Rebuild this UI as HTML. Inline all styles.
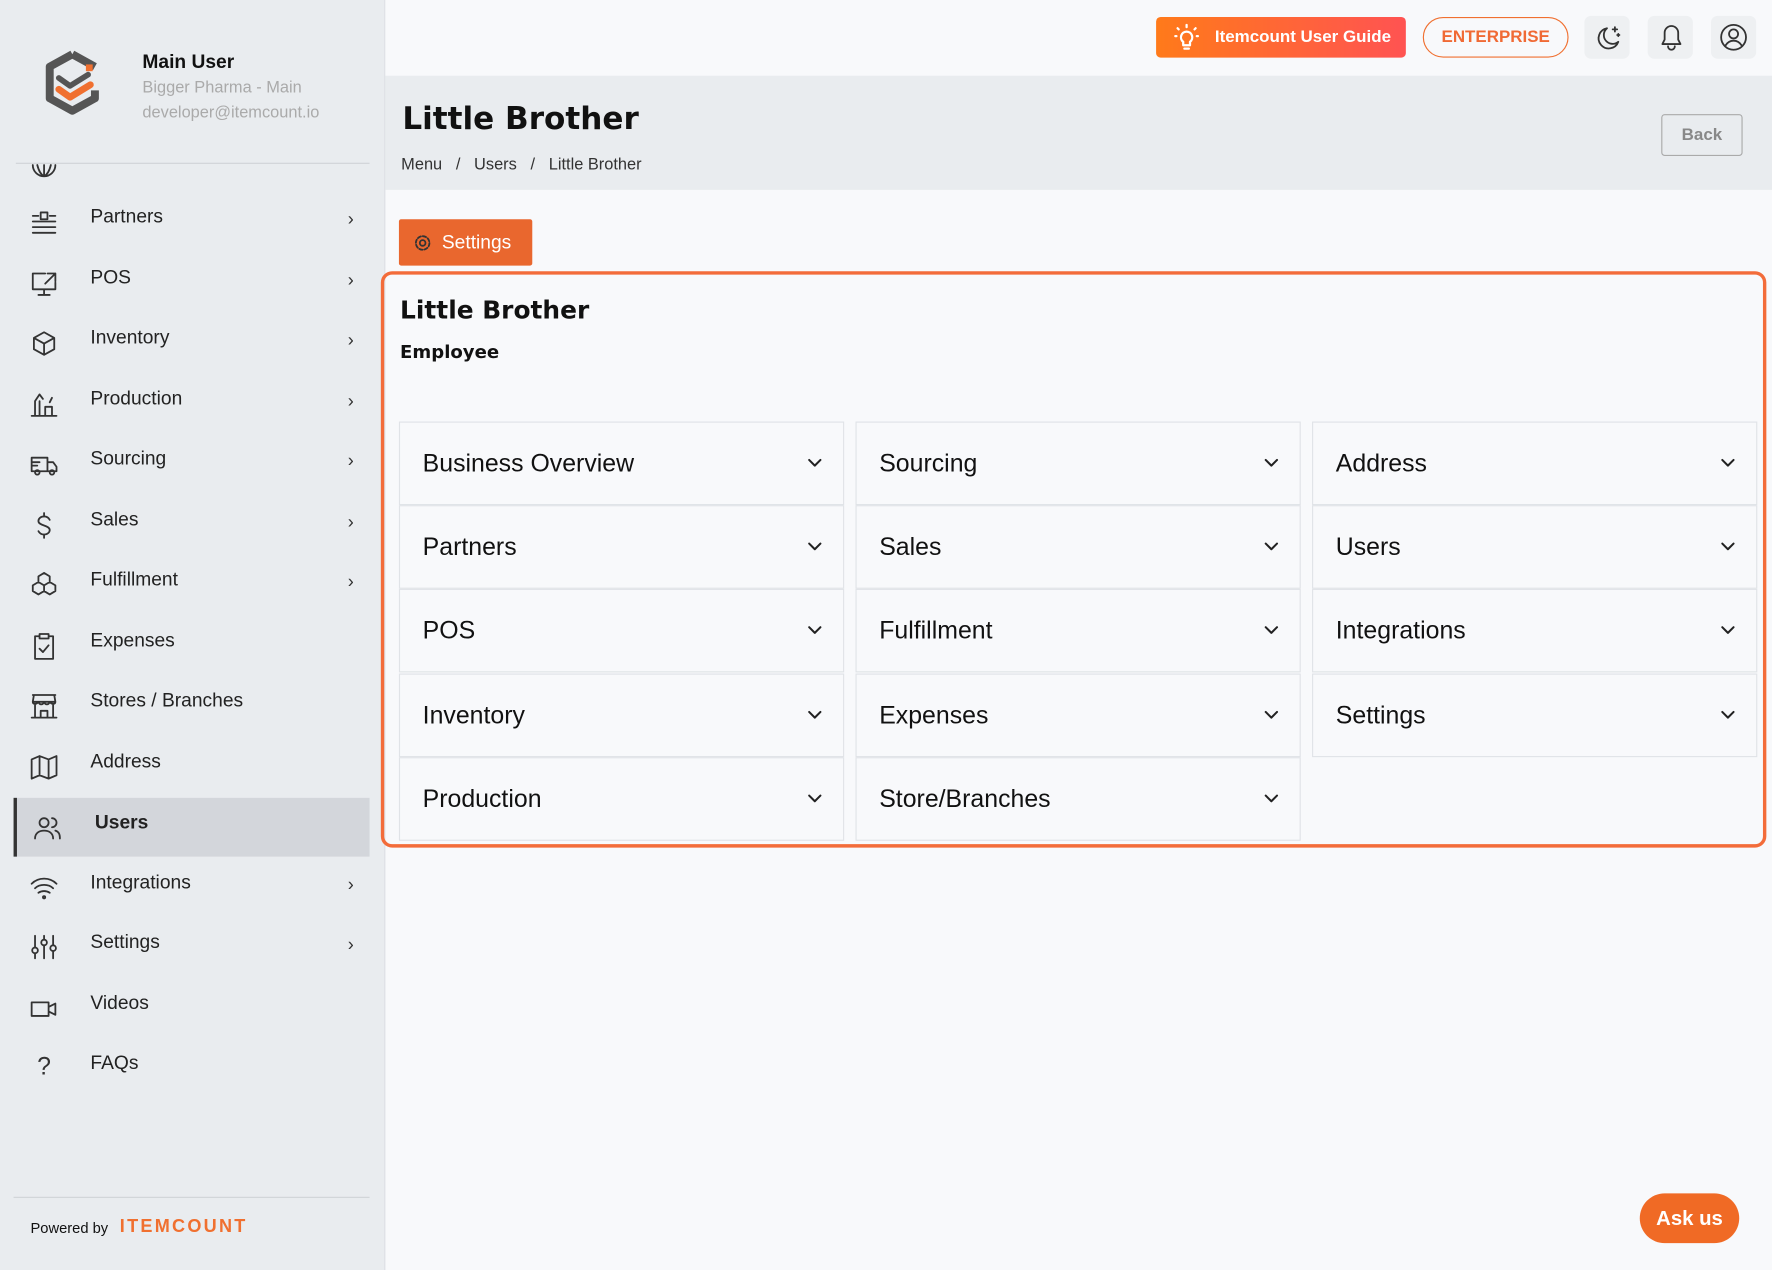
<!DOCTYPE html>
<html><head><meta charset="utf-8"><style>
html,body{margin:0;padding:0;width:1772px;height:1270px;overflow:hidden;background:#f8f9fb}
#w{position:absolute;left:0;top:0;width:1568px;height:1124px;transform:scale(1.13010);transform-origin:0 0;font-family:"Liberation Sans",sans-serif;color:#111}
.sb{position:absolute;left:0;top:0;width:340px;height:1124px;background:#e9ecef;border-right:1px solid #dde0e4}
.ni{position:absolute;left:12px;width:315px;height:52px}
.ni .ic{position:absolute;left:14px;top:14px;width:26px;height:26px}
.ni .t{position:absolute;left:68px;top:0;line-height:44px;font-size:17px;color:#222}
.ni .ch{position:absolute;right:14px;top:16px;font-size:16px;color:#333}
.top{position:absolute;left:341px;top:0;right:0;height:67px;background:#f8f9fb}
.hdr{position:absolute;left:341px;top:67px;right:0;height:101px;background:#e9ecef}
.card{position:absolute;left:337px;top:240px;width:1226px;height:510px;border:3px solid #f36c3a;border-radius:10px;box-sizing:border-box}
.acc{position:absolute;width:394px;height:74px;background:#f8f9fb;border:1px solid #e0e3e7;box-sizing:border-box}
.acc span{position:absolute;left:20px;top:0;line-height:72px;font-size:22px;color:#111}
.acc svg{position:absolute;right:18px;top:30px}
.ib{position:absolute;top:14px;width:40px;height:38px;background:#eef0f2;border-radius:6px}
svg{fill:none;stroke:#333;stroke-width:1.6;stroke-linecap:round;stroke-linejoin:round}
</style></head><body><div id="w">
<div class="sb">
 <svg style="position:absolute;left:38px;top:44px" width="52" height="58" viewBox="0 0 52 58"><path d="M26 4 L46 15 M26 4 L6 15 L6 43 L26 54 L46 43 L46 36" stroke="#555" stroke-width="7" stroke-linecap="butt"/><path d="M14 25 L24 32 L40 22" stroke="#555" stroke-width="5"/><path d="M14 35 L24 42 L42 31" stroke="#f07030" stroke-width="6"/><rect x="38" y="13" width="6" height="6" fill="#f07030" stroke="none"/></svg>
 <div style="position:absolute;left:126px;top:45px;font-weight:bold;font-size:17px">Main User</div>
 <div style="position:absolute;left:126px;top:70px;font-size:14.5px;color:#aaa">Bigger Pharma - Main</div>
 <div style="position:absolute;left:126px;top:92px;font-size:14.5px;color:#aaa">developer@itemcount.io</div>
 <div style="position:absolute;left:14px;top:144px;width:313px;border-top:1px solid #d0d3d7"></div>
 <svg style="position:absolute;left:27px;top:145px" width="24" height="12"><path d="M2 1 A10 10 0 0 0 22 1 M12 1 V11 M6 1 Q8 9 12 11 Q16 9 18 1" /></svg>
 <div class="ni" style="top:170px"><svg class="ic" viewBox="0 0 26 26"><path d="M3 7h5M3 12h20M3 17h20M3 22h20M18 7h5M10 4h6v6h-6z"/></svg><div class="t">Partners</div><div class="ch">›</div></div>
 <div class="ni" style="top:224px"><svg class="ic" viewBox="0 0 26 26"><path d="M14 4H3v14h20v-6M8 23h10M13 18v5M16 4h7v7M23 4l-9 9"/></svg><div class="t">POS</div><div class="ch">›</div></div>
 <div class="ni" style="top:277px"><svg class="ic" viewBox="0 0 26 26"><path d="M13 3l9 5v10l-9 5-9-5V8zM4 8l9 5 9-5M13 13v10"/></svg><div class="t">Inventory</div><div class="ch">›</div></div>
 <div class="ni" style="top:331px"><svg class="ic" viewBox="0 0 26 26"><path d="M2 23h22M5 23V10l4-6 3 4M9 10v13M14 23v-8h6v8M18 11l2-4"/></svg><div class="t">Production</div><div class="ch">›</div></div>
 <div class="ni" style="top:384px"><svg class="ic" viewBox="0 0 26 26"><path d="M2 7h14v12H2zM16 11h5l3 4v4h-8M3 11h6M3 14h4"/><circle cx="7" cy="20" r="2"/><circle cx="20" cy="20" r="2"/></svg><div class="t">Sourcing</div><div class="ch">›</div></div>
 <div class="ni" style="top:438px"><svg class="ic" viewBox="0 0 26 26"><path d="M18 8c-1-2-3-3-5-3-3 0-5 2-5 4s2 3 5 4 5 2 5 4-2 4-5 4c-2 0-4-1-5-3M13 2v3M13 21v3"/></svg><div class="t">Sales</div><div class="ch">›</div></div>
 <div class="ni" style="top:491px"><svg class="ic" viewBox="0 0 26 26"><path d="M13 2l5 3v5l-5 3-5-3V5zM8 10l5 3v5l-5 3-5-3v-5zM18 10l5 3v5l-5 3-5-3v-5z"/></svg><div class="t">Fulfillment</div><div class="ch">›</div></div>
 <div class="ni" style="top:545px"><svg class="ic" viewBox="0 0 26 26"><path d="M9 4H5v20h16V4h-4M9 2h8v4H9zM9 15l3 3 5-6"/></svg><div class="t">Expenses</div></div>
 <div class="ni" style="top:598px"><svg class="ic" viewBox="0 0 26 26"><path d="M3 3h20M4 3l-1 6h20l-1-6M3 9c0 2 3 3 5 0 1 3 4 3 5 0 1 3 4 3 5 0 2 3 5 2 5 0M5 12v11h16V12M10 23v-6h6v6M2 23h22"/></svg><div class="t">Stores / Branches</div></div>
 <div class="ni" style="top:652px"><svg class="ic" viewBox="0 0 26 26"><path d="M2 6l7-3 8 3 7-3v17l-7 3-8-3-7 3zM9 3v17M17 6v17"/></svg><div class="t">Address</div></div>
 <div class="ni" style="top:706px;background:#d3d6db;border-left:3px solid #333;box-sizing:border-box"><svg class="ic" viewBox="0 0 26 26"><circle cx="10" cy="8" r="4"/><path d="M2 22c0-5 4-7 8-7s8 2 8 7M17 4a4 4 0 0 1 0 8M20 15c3 1 4 3 4 7"/></svg><div class="t" style="left:69px;font-weight:bold">Users</div></div>
 <div class="ni" style="top:759px"><svg class="ic" viewBox="0 0 26 26"><path d="M2 9c6-6 16-6 22 0M5 13c4-4 12-4 16 0M8 17c3-2 7-2 10 0"/><circle cx="13" cy="21" r="1"/></svg><div class="t">Integrations</div><div class="ch">›</div></div>
 <div class="ni" style="top:812px"><svg class="ic" viewBox="0 0 26 26"><path d="M5 2v20M13 2v20M21 2v20"/><circle cx="5" cy="15" r="2.5" fill="#e9ecef"/><circle cx="13" cy="8" r="2.5" fill="#e9ecef"/><circle cx="21" cy="13" r="2.5" fill="#e9ecef"/></svg><div class="t">Settings</div><div class="ch">›</div></div>
 <div class="ni" style="top:866px"><svg class="ic" viewBox="0 0 26 26"><path d="M2 7h15v12H2zM17 11l6-3v10l-6-3"/></svg><div class="t">Videos</div></div>
 <div class="ni" style="top:919px"><div class="ic" style="font-size:22px;text-align:center;color:#333;top:12px">?</div><div class="t">FAQs</div></div>
 <div style="position:absolute;left:12px;top:1059px;width:315px;border-top:1px solid #d0d3d7"></div>
 <div style="position:absolute;left:27px;top:1079px;font-size:13px">Powered by</div>
 <div style="position:absolute;left:106px;top:1077px;font-size:16px;font-weight:bold;color:#f07030;letter-spacing:2px">ITEMCOUNT</div>
</div>
<div class="top">
 <div style="position:absolute;left:682px;top:15px;width:221px;height:36px;border-radius:4px;background:linear-gradient(90deg,#ff7a1a,#ff5352)"><svg style="position:absolute;left:14px;top:6px" width="26" height="24" viewBox="0 0 26 24"><path stroke="#fff" stroke-width="2" d="M13 7a5 5 0 0 0-3 9v3h6v-3a5 5 0 0 0-3-9zM11 22h4M13 1v2M5 4l1 1M21 4l-1 1M3 11h1M22 11h1"/></svg><span style="position:absolute;left:52px;top:9px;color:#fff;font-weight:bold;font-size:15px">Itemcount User Guide</span></div>
 <div style="position:absolute;left:918px;top:15px;width:127px;height:34px;border:1.5px solid #f07030;border-radius:18px;text-align:center;line-height:34px;color:#f06a35;font-weight:bold;font-size:15px">ENTERPRISE</div>
 <div class="ib" style="left:1061px"><svg style="position:absolute;left:8px;top:7px" width="26" height="26" viewBox="0 0 26 26" stroke="#555"><path d="M12 4a9 9 0 1 0 10 12A7 7 0 0 1 12 4zM19 3v4M17 5h4M22 9v2M21 10h2"/></svg></div>
 <div class="ib" style="left:1117px"><svg style="position:absolute;left:8px;top:6px" width="26" height="26" viewBox="0 0 26 26" stroke="#555"><path d="M13 3a6 6 0 0 0-6 6v6l-2 4h16l-2-4V9a6 6 0 0 0-6-6zM10 21a3 3 0 0 0 6 0"/></svg></div>
 <div class="ib" style="left:1173px"><svg style="position:absolute;left:7px;top:6px" width="26" height="26" viewBox="0 0 26 26" stroke="#555"><circle cx="13" cy="13" r="11"/><circle cx="13" cy="10" r="4"/><path d="M6 20c2-3 4-4 7-4s5 1 7 4"/></svg></div>
</div>
<div class="hdr">
 <div style="position:absolute;left:15px;top:22px;font-size:27.5px;font-weight:bold;font-family:'DejaVu Sans',sans-serif">Little Brother</div>
 <div style="position:absolute;left:14px;top:71px;font-size:14.5px;color:#333">Menu &nbsp; / &nbsp; Users &nbsp; / &nbsp; Little Brother</div>
 <div style="position:absolute;left:1129px;top:34px;width:70px;height:35px;border:1px solid #aaa;border-radius:3px;text-align:center;line-height:35px;font-size:15px;color:#888;font-weight:bold">Back</div>
</div>
<div style="position:absolute;left:353px;top:194px;width:118px;height:41px;background:#e9672e;border-radius:2px;color:#fff;font-size:17px"><svg style="position:absolute;left:13px;top:13px" width="16" height="16" viewBox="0 0 16 16" stroke="#fff"><circle cx="8" cy="8" r="2.5"/><circle cx="8" cy="8" r="6" stroke-dasharray="3 1.7"/></svg><span style="position:absolute;left:38px;top:11px">Settings</span></div>
<div class="card">
 <div style="position:absolute;left:14px;top:20px;font-size:22px;font-weight:bold;font-family:'DejaVu Sans',sans-serif">Little Brother</div>
 <div style="position:absolute;left:14px;top:59px;font-size:16px;font-weight:bold;font-family:'DejaVu Sans',sans-serif">Employee</div>
</div>
<div id="g"></div>
<script>
var cols=[[ 'Business Overview','Partners','POS','Inventory','Production'],['Sourcing','Sales','Fulfillment','Expenses','Store/Branches'],['Address','Users','Integrations','Settings']];
var xs=[353,757,1161],ys=[373,447,521,596,670],h='';
cols.forEach(function(c,i){c.forEach(function(t,j){h+='<div class="acc" style="left:'+xs[i]+'px;top:'+ys[j]+'px"><span>'+t+'</span><svg width="14" height="10" viewBox="0 0 14 10"><path d="M2 3l5 5 5-5" stroke="#222" stroke-width="1.8"/></svg></div>';});});
document.getElementById('g').innerHTML=h;
</script>
<div style="position:absolute;left:1451px;top:1056px;width:88px;height:44px;border-radius:22px;background:#f06a25;color:#fff;font-weight:bold;font-size:18px;text-align:center;line-height:44px">Ask us</div>
</div></body></html>
